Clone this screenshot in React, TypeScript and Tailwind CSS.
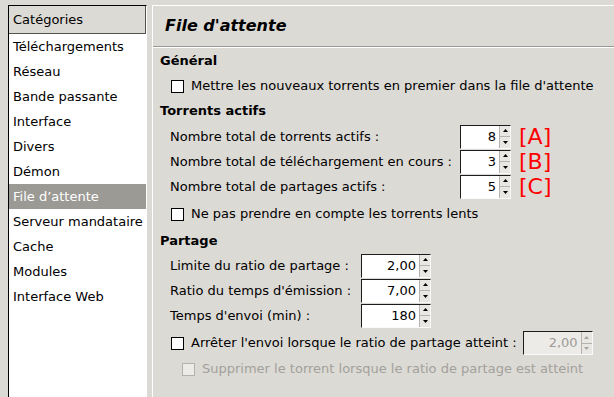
import React from "react";

const categories = [
  "Téléchargements",
  "Réseau",
  "Bande passante",
  "Interface",
  "Divers",
  "Démon",
  "File d’attente",
  "Serveur mandataire",
  "Cache",
  "Modules",
  "Interface Web",
];

function Arrow({ up, disabled }: { up?: boolean; disabled?: boolean }) {
  return (
    <svg width="5" height="3" viewBox="0 0 5 3" className="block">
      <path d={up ? "M0 3 L2.5 0 L5 3 Z" : "M0 0 L2.5 3 L5 0 Z"} fill={disabled ? "#a8a6a1" : "#000"} />
    </svg>
  );
}

function Spin({ value, width, disabled }: { value: string; width: string; disabled?: boolean }) {
  return (
    <div
      className={`${width} h-[24px] flex border border-t-[#1c1c1c] border-l-[#1c1c1c] border-r-[#fafafa] border-b-[#fafafa] ${
        disabled ? "bg-[#edebe8] text-[#9d9b97]" : "bg-white text-black"
      }`}
    >
      <div className="flex-1 flex items-center justify-end pr-[3px]">{value}</div>
      <div className="w-[11px] flex flex-col border-l border-[#b5b3ae] bg-[#e9e7e3]">
        <div className="flex-1 flex items-center justify-center border-b border-[#b5b3ae]">
          <Arrow up disabled={disabled} />
        </div>
        <div className="flex-1 flex items-center justify-center">
          <Arrow disabled={disabled} />
        </div>
      </div>
    </div>
  );
}

function Check({ disabled }: { disabled?: boolean }) {
  return (
    <div
      className={`w-[13px] h-[13px] shrink-0 border ${
        disabled ? "border-[#b3b1ac] bg-[#edebe8]" : "border-black bg-white"
      }`}
    />
  );
}

function SpinRow({
  label,
  value,
  labelWidth,
  spinWidth,
  tag,
}: {
  label: string;
  value: string;
  labelWidth: string;
  spinWidth: string;
  tag?: string;
}) {
  return (
    <div className="h-[25px] flex items-center pl-[17px]">
      <div className={`${labelWidth} shrink-0`}>{label}</div>
      <Spin value={value} width={spinWidth} />
      {tag && <div className="ml-[8px] text-[22px] leading-none text-[#ff0000]">{tag}</div>}
    </div>
  );
}

export default function App() {
  return (
    <div className="w-[614px] h-[397px] overflow-hidden bg-[#dcdad5] flex pt-[5px] pl-[8px] text-[13px] text-black font-['DejaVu_Sans',sans-serif]">
      {/* Categories list */}
      <div className="w-[139px] h-[400px] shrink-0 bg-white border-l border-t border-black border-r border-r-white">
        <div className="h-[28px] flex items-center pl-[4px] bg-[#dcdad5] border-r border-b border-[#55534f]">
          Catégories
        </div>
        {categories.map((c) => (
          <div
            key={c}
            className={`h-[25px] flex items-center pl-[4px] ${
              c === "File d’attente" ? "bg-[#9c9a94] text-white" : ""
            }`}
          >
            {c}
          </div>
        ))}
      </div>

      {/* Settings panel */}
      <div className="flex-1 ml-[5px] border-l border-t border-white">
        <div className="h-[40px] flex items-center pl-[12px] text-[16px] font-bold italic">File d'attente</div>
        <div className="h-px bg-[#9a9893]" />
        <div className="h-px bg-white" />

        <div className="h-[26px] flex items-center pl-[7px] font-bold">Général</div>
        <div className="h-[24px] flex items-center pl-[18px] gap-[7px]">
          <Check />
          <span>Mettre les nouveaux torrents en premier dans la file d'attente</span>
        </div>

        <div className="h-[26px] flex items-center pl-[7px] font-bold">Torrents actifs</div>
        <SpinRow label="Nombre total de torrents actifs :" value="8" labelWidth="w-[290px]" spinWidth="w-[51px]" tag="[A]" />
        <SpinRow label="Nombre total de téléchargement en cours :" value="3" labelWidth="w-[290px]" spinWidth="w-[51px]" tag="[B]" />
        <SpinRow label="Nombre total de partages actifs :" value="5" labelWidth="w-[290px]" spinWidth="w-[51px]" tag="[C]" />
        <div className="h-[30px] flex items-center pl-[18px] gap-[7px]">
          <Check />
          <span>Ne pas prendre en compte les torrents lents</span>
        </div>

        <div className="h-[24px] flex items-center pl-[7px] font-bold">Partage</div>
        <SpinRow label="Limite du ratio de partage :" value="2,00" labelWidth="w-[191px]" spinWidth="w-[70px]" />
        <SpinRow label="Ratio du temps d'émission :" value="7,00" labelWidth="w-[191px]" spinWidth="w-[70px]" />
        <SpinRow label="Temps d'envoi (min) :" value="180" labelWidth="w-[191px]" spinWidth="w-[70px]" />
        <div className="h-[30px] flex items-center pl-[18px]">
          <Check />
          <span className="ml-[7px]">Arrêter l'envoi lorsque le ratio de partage atteint :</span>
          <div className="ml-[6px]">
            <Spin value="2,00" width="w-[70px]" disabled />
          </div>
        </div>
        <div className="h-[22px] flex items-center pl-[29px] gap-[7px] text-[#a3a19c]">
          <Check disabled />
          <span>Supprimer le torrent lorsque le ratio de partage est atteint</span>
        </div>
      </div>
    </div>
  );
}
